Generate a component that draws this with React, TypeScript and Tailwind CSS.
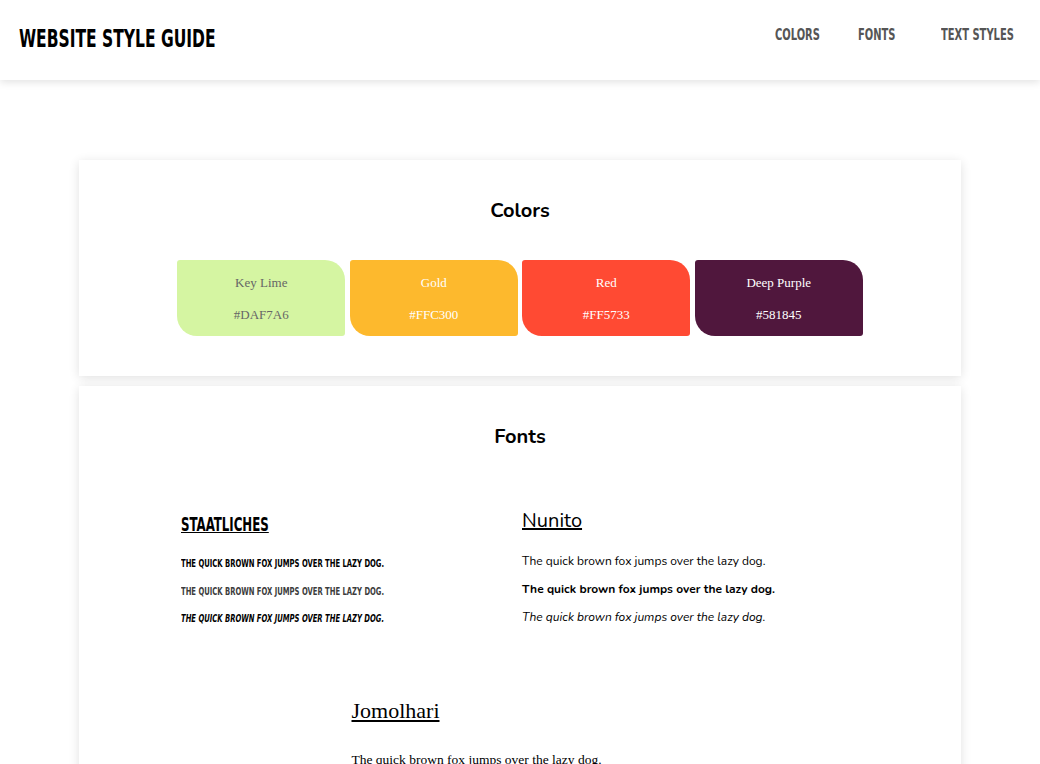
import React from "react";

const staat = { fontFamily: '"DejaVu Sans Condensed", "Liberation Sans", sans-serif' };

const swatches = [
  { name: "Key Lime", hex: "#DAF7A6", bg: "bg-[#d5f5a2]", text: "text-[#666666]" },
  { name: "Gold", hex: "#FFC300", bg: "bg-[#fdb92d]", text: "text-white" },
  { name: "Red", hex: "#FF5733", bg: "bg-[#ff4a33]", text: "text-white" },
  { name: "Deep Purple", hex: "#581845", bg: "bg-[#50173d]", text: "text-white" },
];

function Cond({ w, u, children }: { w: string; u?: boolean; children: React.ReactNode }) {
  return (
    <span className={`inline-block whitespace-nowrap ${w}`}>
      <span className={`inline-block origin-left scale-x-[0.69] ${u ? "underline" : ""}`}>{children}</span>
    </span>
  );
}

const line = "The quick brown fox jumps over the lazy dog.";

export default function App() {
  return (
    <div className="min-h-screen bg-white text-black" style={{ fontFamily: '"Nunito", "Lato", "Open Sans", sans-serif' }}>
      <header className="h-[80px] flex items-center justify-between bg-white shadow-[0_2px_8px_rgba(0,0,0,0.12)] pl-[19px] pr-[27px]">
        <h1 className="text-[25px] font-bold uppercase text-black -mt-[2px]" style={staat}>
          <Cond w="w-[200px]">Website Style Guide</Cond>
        </h1>
        <nav className="flex items-center text-[16px] font-bold text-[#555555] uppercase -mt-[10px]" style={staat}>
          <a className="mr-[38px]"><Cond w="w-[45px]">Colors</Cond></a>
          <a className="mr-[47px]"><Cond w="w-[36px]">Fonts</Cond></a>
          <a><Cond w="w-[72px]">Text Styles</Cond></a>
        </nav>
      </header>

      <main className="pt-[80px] px-[79px] flex flex-col gap-[10px]">
        <section className="bg-white shadow-[0_2px_10px_rgba(0,0,0,0.12)] pt-[39px] pb-[40px]">
          <h2 className="text-center text-[20px] font-bold leading-[24px]">Colors</h2>
          <div className="mt-[37px] flex justify-center gap-[4.5px]" style={{ fontFamily: '"Liberation Serif", serif' }}>
            {swatches.map((s) => (
              <div
                key={s.name}
                className={`w-[168px] h-[76px] ${s.bg} ${s.text} rounded-tl-[3px] rounded-br-[3px] rounded-tr-[20px] rounded-bl-[20px] flex flex-col items-center pt-[14px] text-[13px] leading-[17px]`}
              >
                <span>{s.name}</span>
                <span className="mt-[15px]">{s.hex}</span>
              </div>
            ))}
          </div>
        </section>

        <section className="bg-white shadow-[0_2px_10px_rgba(0,0,0,0.12)] pt-[39px] pb-[40px]">
          <h2 className="text-center text-[20px] font-bold leading-[24px]">Fonts</h2>
          <div className="mt-[59px] flex flex-wrap justify-center">
            <div className="w-[341px] pl-[2px]" style={staat}>
              <h3 className="text-[19px] font-bold uppercase mt-[4px] leading-[24px]">
                <Cond w="w-[90px]" u>Staatliches</Cond>
              </h3>
              <p className="text-[11px] font-bold uppercase mt-[21px] leading-[14px]">
                <Cond w="w-[205px]">{line}</Cond>
              </p>
              <p className="text-[11px] font-bold uppercase text-[#3c3c3c] mt-[14px] leading-[14px]">
                <Cond w="w-[205px]">{line}</Cond>
              </p>
              <p className="text-[11px] font-bold italic uppercase mt-[13px] leading-[14px]">
                <Cond w="w-[205px]">{line}</Cond>
              </p>
            </div>
            <div className="w-[341px] pl-[2px]">
              <h3 className="text-[20px] underline leading-[26px]">Nunito</h3>
              <p className="text-[12px] mt-[19px] leading-[16px]">{line}</p>
              <p className="text-[12px] font-bold mt-[12px] leading-[16px]">{line}</p>
              <p className="text-[12px] italic mt-[12px] leading-[16px]">{line}</p>
            </div>
            <div className="w-[341px] pl-[2px] mt-[71px]" style={{ fontFamily: '"Liberation Serif", serif' }}>
              <h3 className="text-[22px] underline leading-[28px]">Jomolhari</h3>
              <p className="text-[13.5px] mt-[25px] leading-[20px]">{line}</p>
              <p className="text-[13.5px] font-bold mt-[14px] leading-[20px]">{line}</p>
              <p className="text-[13.5px] italic mt-[14px] leading-[20px]">{line}</p>
            </div>
          </div>
        </section>
      </main>
    </div>
  );
}
